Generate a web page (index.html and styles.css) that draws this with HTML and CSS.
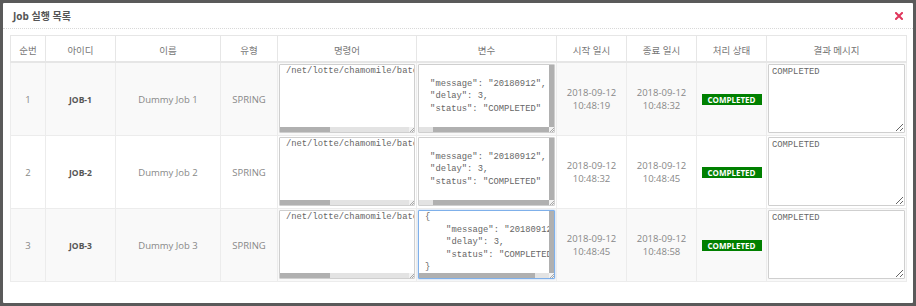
FILE: index.html
```html
<!DOCTYPE html>
<html lang="ko">
<head>
<meta charset="utf-8">
<title>Job 실행 목록</title>
<link rel="stylesheet" href="styles.css">
</head>
<body>
<div class="modal">
  <div class="modal-header">
    <h4 class="modal-title">Job 실행 목록</h4>
    <button class="close" type="button" aria-label="닫기">
      <svg width="8" height="8" viewBox="0 0 8 8"><path d="M1 1L7 7M7 1L1 7" stroke="#e0365c" stroke-width="2" stroke-linecap="square"/></svg>
    </button>
  </div>
  <div class="modal-body">
    <table class="grid">
      <colgroup>
        <col class="c-seq"><col class="c-id"><col class="c-name"><col class="c-type"><col class="c-cmd"><col class="c-var"><col class="c-date"><col class="c-date"><col class="c-state"><col class="c-msg">
      </colgroup>
      <thead>
        <tr><th>순번</th><th>아이디</th><th>이름</th><th>유형</th><th>명령어</th><th>변수</th><th>시작 일시</th><th>종료 일시</th><th>처리 상태</th><th>결과 메시지</th></tr>
      </thead>
      <tbody>
        <tr class="odd">
          <td>1</td><td class="job-id">JOB-1</td><td>Dummy Job 1</td><td>SPRING</td>
          <td class="ta-cell">
            <div class="ta ta-cmd" role="textbox" aria-readonly="true">
              <div class="ta-view"><pre class="ta-text">/net/lotte/chamomile/batch/bin/runJob.sh dummyJob1 20180912</pre></div>
              <div class="hbar"><div class="thumb" style="width:39%"></div></div>
              <div class="corner"><svg width="5" height="5" viewBox="0 0 5 5"><path d="M1 5L5 1M3 5L5 3" stroke="#8a8a8a" stroke-width="0.7"/></svg></div>
            </div>
          </td>
          <td class="ta-cell">
            <div class="ta ta-var" role="textbox" aria-readonly="true">
              <div class="ta-view"><pre class="ta-text scrolled">{
    "message": "20180912",
    "delay": 3,
    "status": "COMPLETED"
}</pre></div>
              <div class="vbar"><div class="thumb"></div></div>
              <div class="hbar at-end"><div class="thumb" style="width:89%"></div></div>
              <div class="corner"><svg width="5" height="5" viewBox="0 0 5 5"><path d="M1 5L5 1M3 5L5 3" stroke="#8a8a8a" stroke-width="0.7"/></svg></div>
            </div>
          </td>
          <td>2018-09-12<br>10:48:19</td><td>2018-09-12<br>10:48:32</td>
          <td><span class="badge">COMPLETED</span></td>
          <td class="ta-cell"><textarea class="msg" readonly>COMPLETED</textarea></td>
        </tr>
        <tr>
          <td>2</td><td class="job-id">JOB-2</td><td>Dummy Job 2</td><td>SPRING</td>
          <td class="ta-cell">
            <div class="ta ta-cmd" role="textbox" aria-readonly="true">
              <div class="ta-view"><pre class="ta-text">/net/lotte/chamomile/batch/bin/runJob.sh dummyJob2 20180912</pre></div>
              <div class="hbar"><div class="thumb" style="width:39%"></div></div>
              <div class="corner"><svg width="5" height="5" viewBox="0 0 5 5"><path d="M1 5L5 1M3 5L5 3" stroke="#8a8a8a" stroke-width="0.7"/></svg></div>
            </div>
          </td>
          <td class="ta-cell">
            <div class="ta ta-var" role="textbox" aria-readonly="true">
              <div class="ta-view"><pre class="ta-text scrolled">{
    "message": "20180912",
    "delay": 3,
    "status": "COMPLETED"
}</pre></div>
              <div class="vbar"><div class="thumb"></div></div>
              <div class="hbar at-end"><div class="thumb" style="width:89%"></div></div>
              <div class="corner"><svg width="5" height="5" viewBox="0 0 5 5"><path d="M1 5L5 1M3 5L5 3" stroke="#8a8a8a" stroke-width="0.7"/></svg></div>
            </div>
          </td>
          <td>2018-09-12<br>10:48:32</td><td>2018-09-12<br>10:48:45</td>
          <td><span class="badge">COMPLETED</span></td>
          <td class="ta-cell"><textarea class="msg" readonly>COMPLETED</textarea></td>
        </tr>
        <tr class="odd">
          <td>3</td><td class="job-id">JOB-3</td><td>Dummy Job 3</td><td>SPRING</td>
          <td class="ta-cell">
            <div class="ta ta-cmd" role="textbox" aria-readonly="true">
              <div class="ta-view"><pre class="ta-text">/net/lotte/chamomile/batch/bin/runJob.sh dummyJob3 20180912</pre></div>
              <div class="hbar"><div class="thumb" style="width:39%"></div></div>
              <div class="corner"><svg width="5" height="5" viewBox="0 0 5 5"><path d="M1 5L5 1M3 5L5 3" stroke="#8a8a8a" stroke-width="0.7"/></svg></div>
            </div>
          </td>
          <td class="ta-cell">
            <div class="ta ta-var focused" role="textbox" aria-readonly="true">
              <div class="ta-view"><pre class="ta-text">{
    "message": "20180912",
    "delay": 3,
    "status": "COMPLETED"
}</pre></div>
              <div class="vbar"><div class="thumb"></div></div>
              <div class="hbar"><div class="thumb" style="width:89%"></div></div>
              <div class="corner"><svg width="5" height="5" viewBox="0 0 5 5"><path d="M1 5L5 1M3 5L5 3" stroke="#8a8a8a" stroke-width="0.7"/></svg></div>
            </div>
          </td>
          <td>2018-09-12<br>10:48:45</td><td>2018-09-12<br>10:48:58</td>
          <td><span class="badge">COMPLETED</span></td>
          <td class="ta-cell"><textarea class="msg" readonly>COMPLETED</textarea></td>
        </tr>
      </tbody>
    </table>
  </div>
</div>
</body>
</html>
```

FILE: styles.css
```css
html, body {
  margin: 0;
  padding: 0;
}
body {
  width: 916px;
  height: 306px;
  overflow: hidden;
  background: #5a5a5a;
  font-family: "Open Sans", "Noto Sans CJK KR", sans-serif;
  font-size: 9.5px;
  color: #888;
  padding: 3px;
  box-sizing: border-box;
}
.modal {
  width: 910px;
  height: 300px;
  background: #fff;
  border-radius: 1px;
}
.modal-header {
  height: 26px;
  box-sizing: border-box;
  border-bottom: 1px dotted #d8d8d8;
  display: flex;
  align-items: center;
  justify-content: space-between;
  padding: 0 10px 0 10px;
}
.modal-title {
  margin: 0;
  font-size: 10px;
  font-weight: 700;
  color: #555;
}
.close {
  border: 0;
  background: none;
  padding: 0;
  width: 8px;
  height: 8px;
  display: flex;
}
.modal-body {
  padding: 6px 7px 0 7px;
}
.grid {
  width: 896px;
  table-layout: fixed;
  border-collapse: collapse;
  border: 1px solid #e6e6e6;
}
.c-seq { width: 35px; }
.c-id { width: 70px; }
.c-name { width: 105px; }
.c-type { width: 57px; }
.c-cmd { width: 139px; }
.c-var { width: 140px; }
.c-date { width: 70px; }
.c-state { width: 70px; }
.c-msg { width: 140px; }
.grid th {
  height: 23px;
  font-weight: 400;
  color: #777;
  border: 1px solid #e6e6e6;
  border-bottom: 2px solid #e6e6e6;
  padding: 2px 0 0 0;
  text-align: center;
  background: #fff;
}
.grid td {
  height: 73px;
  box-sizing: border-box;
  border: 1px solid #ececec;
  text-align: center;
  vertical-align: middle;
  padding: 0;
  line-height: 13px;
}
.grid tr.odd td {
  background: #f9f9f9;
}
.grid td.job-id {
  font-size: 8.5px;
  font-weight: 700;
  color: #555;
}
.grid td.ta-cell {
  padding: 1px 1px 2px 1px;
}

/* read-only code boxes with their scroll state */
.ta {
  display: grid;
  grid-template-columns: 1fr 5px;
  grid-template-rows: 1fr 5px;
  height: 69px;
  box-sizing: border-box;
  border: 1px solid #cfcfcf;
  border-radius: 1px;
  background: #fff;
  text-align: left;
}
.ta.focused {
  border-color: #7fb0ea;
  box-shadow: 0 0 2px rgba(102, 160, 233, 0.6);
}
.ta-view {
  overflow: hidden;
  min-width: 0;
}
.ta-cmd .ta-view {
  grid-column: 1 / 3;
}
.ta-text {
  margin: 0;
  padding: 0 0 0 6px;
  font-family: "Liberation Mono", "Courier New", monospace;
  font-size: 8.8px;
  line-height: 12.6px;
  color: #666;
  white-space: pre;
}
.ta-text.scrolled {
  margin-left: -16px;
}
.hbar {
  display: flex;
  background: #e3e3e3;
}
.hbar.at-end {
  justify-content: flex-end;
}
.hbar .thumb {
  height: 100%;
  background: #b0b0b0;
}
.vbar {
  display: flex;
  background: #e3e3e3;
}
.vbar .thumb {
  width: 100%;
  background: #b0b0b0;
}
.corner {
  background: #f2f2f2;
  display: flex;
}
.msg {
  display: block;
  width: 100%;
  height: 69px;
  box-sizing: border-box;
  margin: 0;
  border: 1px solid #cfcfcf;
  border-radius: 1px;
  background: #fff;
  color: #666;
  font-family: "Liberation Mono", "Courier New", monospace;
  font-size: 8.8px;
  line-height: 12.6px;
  padding: 1px 3px;
  overflow: hidden;
  outline: none;
  resize: both;
}
.badge {
  display: inline-block;
  width: 60px;
  height: 11px;
  line-height: 11px;
  background: #008000;
  color: #fff;
  font-size: 8px;
  font-weight: 700;
  vertical-align: middle;
}
```
